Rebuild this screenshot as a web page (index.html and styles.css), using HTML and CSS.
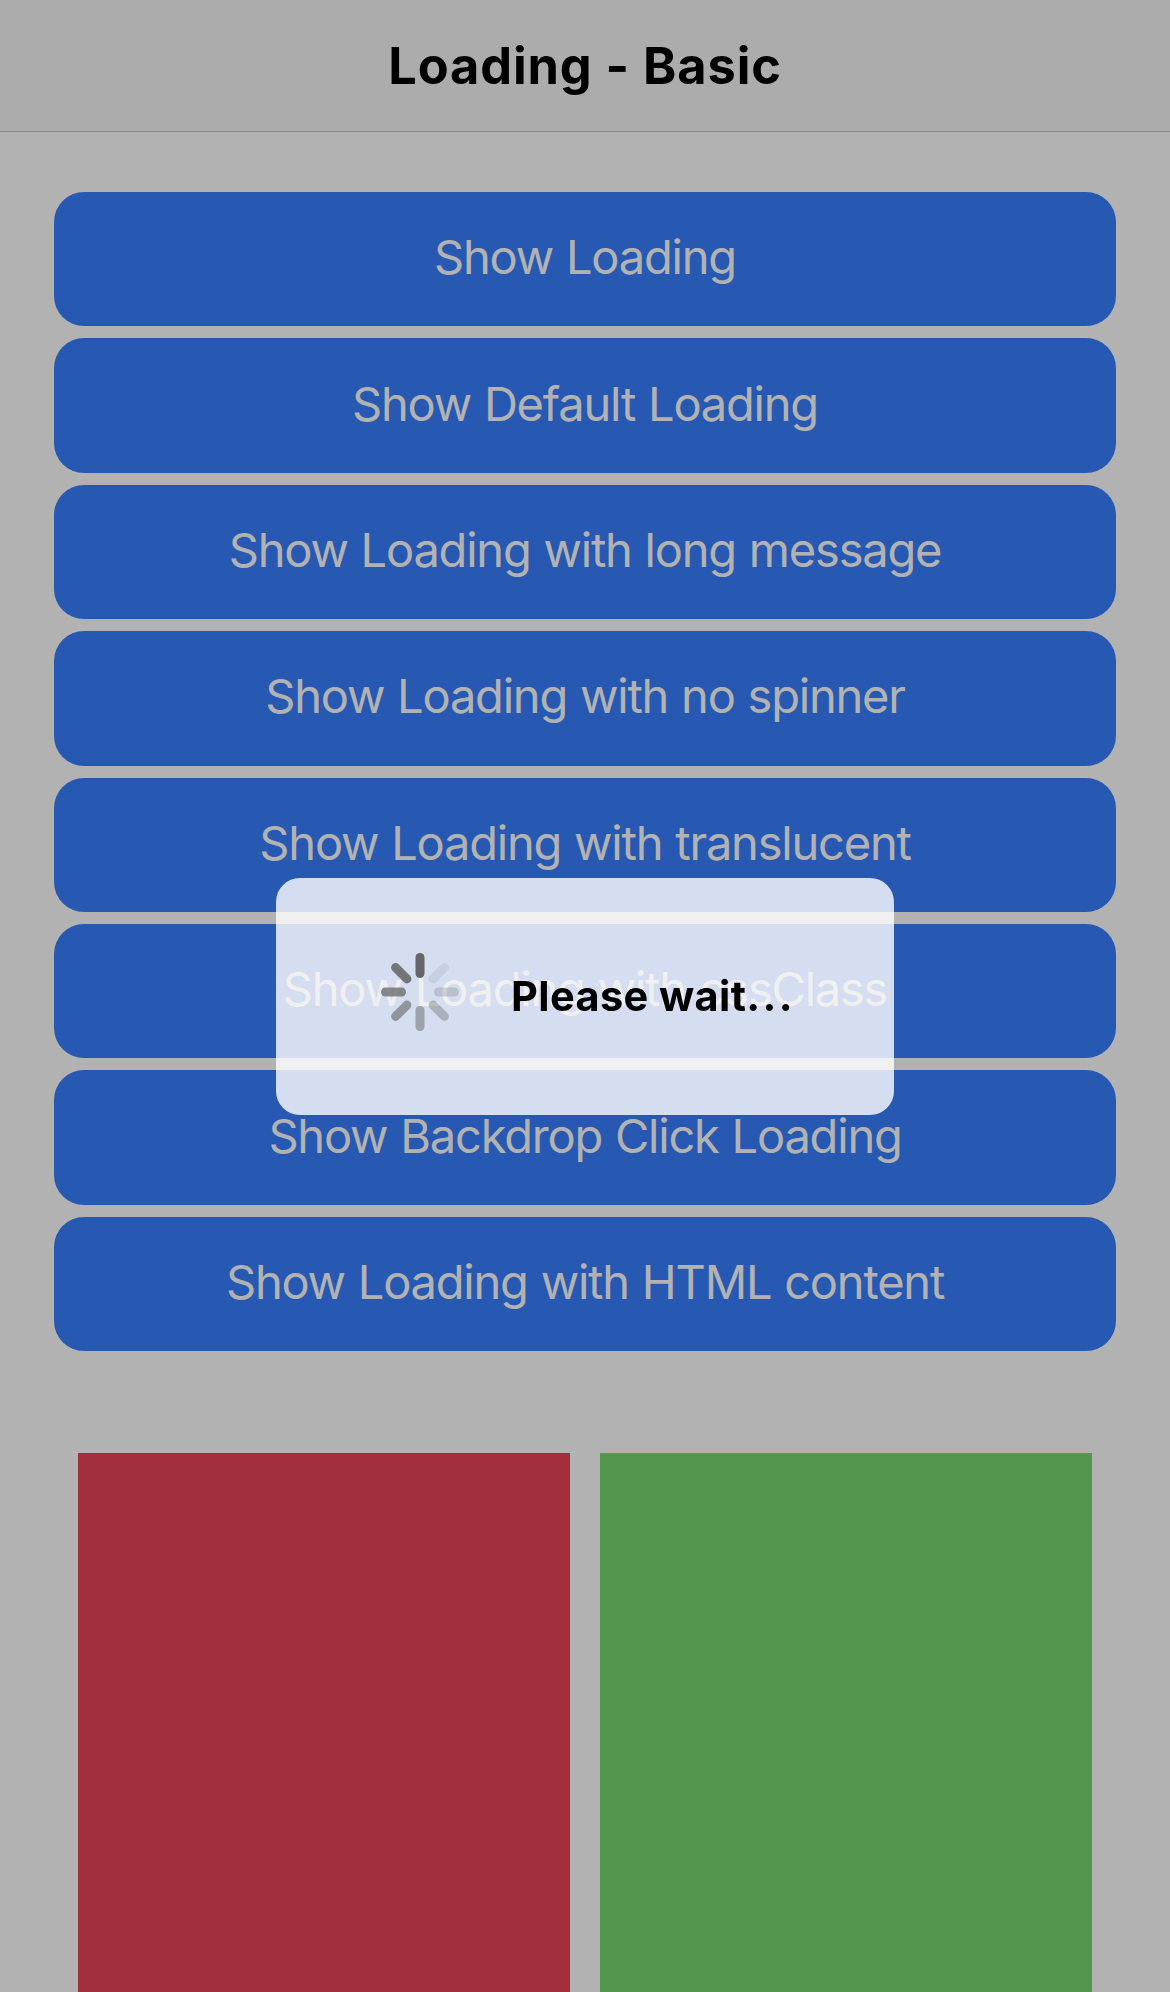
FILE: index.html
```html
<!DOCTYPE html>
<html lang="en">
<head>
<meta charset="utf-8">
<title>Loading - Basic</title>
<link rel="stylesheet" href="styles.css">
</head>
<body>
<header class="toolbar"><h1 class="title">Loading - Basic</h1></header>
<main class="content">
  <div class="buttons">
    <button class="button">Show Loading</button>
    <button class="button">Show Default Loading</button>
    <button class="button">Show Loading with long message</button>
    <button class="button">Show Loading with no spinner</button>
    <button class="button">Show Loading with translucent</button>
    <button class="button">Show Loading with cssClass</button>
    <button class="button">Show Backdrop Click Loading</button>
    <button class="button">Show Loading with HTML content</button>
  </div>
  <div class="grid">
    <div class="block block-red"></div>
    <div class="block block-green"></div>
  </div>
</main>
<div class="backdrop">
  <div class="loading" role="dialog">
    <svg class="spinner" viewBox="-39 -39 78 78" stroke="#666" stroke-width="9" stroke-linecap="round">
      <path d="M0-18.5V-34.5"/>
      <path d="M0-18.5V-34.5" transform="rotate(45)" opacity=".125"/>
      <path d="M0-18.5V-34.5" transform="rotate(90)" opacity=".25"/>
      <path d="M0-18.5V-34.5" transform="rotate(135)" opacity=".375"/>
      <path d="M0-18.5V-34.5" transform="rotate(180)" opacity=".5"/>
      <path d="M0-18.5V-34.5" transform="rotate(225)" opacity=".625"/>
      <path d="M0-18.5V-34.5" transform="rotate(270)" opacity=".75"/>
      <path d="M0-18.5V-34.5" transform="rotate(315)" opacity=".875"/>
    </svg>
    <span class="message">Please wait<span class="dots">...</span></span>
  </div>
</div>
</body>
</html>
```
FILE: styles.css
```css
* { box-sizing: border-box; }
body {
  margin: 0;
  height: 1992px;
  overflow: hidden;
  display: flex;
  flex-direction: column;
  background: #fff;
  font-family: Inter, "Liberation Sans", sans-serif;
}
.toolbar {
  height: 132px;
  display: flex;
  align-items: center;
  justify-content: center;
  background: #f7f7f7;
  border-bottom: 1px solid #c8c8c8;
}
.title {
  margin: 0;
  font-size: 50.5px;
  font-weight: 700;
  line-height: 60px;
  letter-spacing: .9px;
}
.content {
  flex: 1;
  display: flex;
  flex-direction: column;
  gap: 101.8px;
  padding: 60px 54px 0;
}
.buttons {
  display: flex;
  flex-direction: column;
  gap: 12px;
}
.button {
  height: 134.4px;
  padding: 0 0 3.8px;
  border: 0;
  border-radius: 30px;
  background: #3880ff;
  color: #fff;
  font: 400 47px/60px Inter, "Liberation Sans", sans-serif;
  letter-spacing: -1.2px;
  word-spacing: .9px;
}
.grid {
  flex: 1;
  display: grid;
  grid-template-columns: 1fr 1fr;
  gap: 30px;
  padding: 0 24px;
}
.block-red { background: #e9435a; }
.block-green { background: #77d972; }
.backdrop {
  position: fixed;
  inset: 0;
  display: flex;
  align-items: center;
  justify-content: center;
  background: rgba(0, 0, 0, .3);
}
.loading {
  width: 618px;
  height: 237px;
  display: flex;
  align-items: center;
  gap: 52px;
  padding: 0 0 9px 105px;
  border-radius: 24px;
  background: rgba(255, 255, 255, .8);
}
.spinner {
  width: 78px;
  height: 78px;
  fill: none;
}
.message {
  padding-top: 9px;
  font-size: 41.5px;
  font-weight: 700;
  line-height: 51px;
  letter-spacing: .4px;
  white-space: nowrap;
}
.dots { letter-spacing: 2.4px; }
```
